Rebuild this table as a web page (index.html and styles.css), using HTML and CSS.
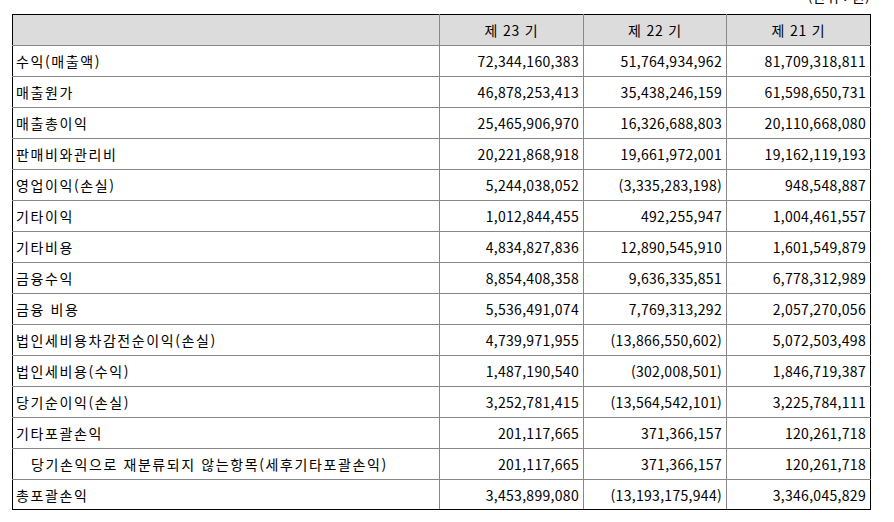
FILE: index.html
```html
<!DOCTYPE html>
<html lang="ko">
<head>
<meta charset="utf-8">
<title>포괄손익계산서</title>
<link rel="stylesheet" href="styles.css">
</head>
<body>
<div class="page">
  <div class="unit">(단위 : 원)</div>
  <table class="fs">
    <colgroup>
      <col class="c-name"><col class="c-num1"><col class="c-num"><col class="c-num4">
    </colgroup>
    <thead>
      <tr><th></th><th>제 23 기</th><th>제 22 기</th><th>제 21 기</th></tr>
    </thead>
    <tbody>
      <tr><td class="name">수익(매출액)</td><td>72,344,160,383</td><td>51,764,934,962</td><td>81,709,318,811</td></tr>
      <tr><td class="name">매출원가</td><td>46,878,253,413</td><td>35,438,246,159</td><td>61,598,650,731</td></tr>
      <tr><td class="name">매출총이익</td><td>25,465,906,970</td><td>16,326,688,803</td><td>20,110,668,080</td></tr>
      <tr><td class="name">판매비와관리비</td><td>20,221,868,918</td><td>19,661,972,001</td><td>19,162,119,193</td></tr>
      <tr><td class="name">영업이익(손실)</td><td>5,244,038,052</td><td>(3,335,283,198)</td><td>948,548,887</td></tr>
      <tr><td class="name">기타이익</td><td>1,012,844,455</td><td>492,255,947</td><td>1,004,461,557</td></tr>
      <tr><td class="name">기타비용</td><td>4,834,827,836</td><td>12,890,545,910</td><td>1,601,549,879</td></tr>
      <tr><td class="name">금융수익</td><td>8,854,408,358</td><td>9,636,335,851</td><td>6,778,312,989</td></tr>
      <tr><td class="name">금융 비용</td><td>5,536,491,074</td><td>7,769,313,292</td><td>2,057,270,056</td></tr>
      <tr><td class="name">법인세비용차감전순이익(손실)</td><td>4,739,971,955</td><td>(13,866,550,602)</td><td>5,072,503,498</td></tr>
      <tr><td class="name">법인세비용(수익)</td><td>1,487,190,540</td><td>(302,008,501)</td><td>1,846,719,387</td></tr>
      <tr><td class="name">당기순이익(손실)</td><td>3,252,781,415</td><td>(13,564,542,101)</td><td>3,225,784,111</td></tr>
      <tr><td class="name">기타포괄손익</td><td>201,117,665</td><td>371,366,157</td><td>120,261,718</td></tr>
      <tr><td class="name indent">당기손익으로 재분류되지 않는항목(세후기타포괄손익)</td><td>201,117,665</td><td>371,366,157</td><td>120,261,718</td></tr>
      <tr class="last"><td class="name">총포괄손익</td><td>3,453,899,080</td><td>(13,193,175,944)</td><td>3,346,045,829</td></tr>
    </tbody>
  </table>
</div>
</body>
</html>
```

FILE: styles.css
```css
html, body {
  margin: 0;
  padding: 0;
  background: #ffffff;
}

.page {
  padding: 0 0 0 12px;
  font-family: "Noto Sans CJK KR", "Noto Sans", sans-serif;
  font-size: 14px;
  color: #000000;
}

.unit {
  width: 858px;
  height: 14px;
  line-height: 14px;
  margin-top: -11px;
  margin-bottom: 11px;
  text-align: right;
  letter-spacing: 0.3px;
}

.fs {
  border-collapse: collapse;
  table-layout: fixed;
  width: 858px;
  border: 1px solid #000000;
}

.c-name { width: 427px; }
.c-num1 { width: 144px; }
.c-num { width: 143px; }
.c-num4 { width: 144px; }

.fs th,
.fs td {
  border: 1px solid #888888;
  height: 31px;
  padding: 0 4px;
  box-sizing: border-box;
  white-space: nowrap;
  font-weight: normal;
  letter-spacing: 0.3px;
  line-height: 16px;
}

.fs thead th {
  background: #dcdcdc;
  text-align: center;
  letter-spacing: 0.8px;
  border-top-color: #000000;
}

.fs thead th:first-child { border-left-color: #000000; }
.fs thead th:last-child { border-right-color: #000000; }

.fs td {
  text-align: right;
}

.fs td:last-child { border-right-color: #000000; }

.fs td.name {
  text-align: left;
  padding-left: 3px;
  letter-spacing: 1.6px;
  border-left-color: #000000;
}

.fs td.indent {
  padding-left: 18px;
}

.fs tr.last td {
  height: 30px;
  border-bottom-color: #000000;
}
```
